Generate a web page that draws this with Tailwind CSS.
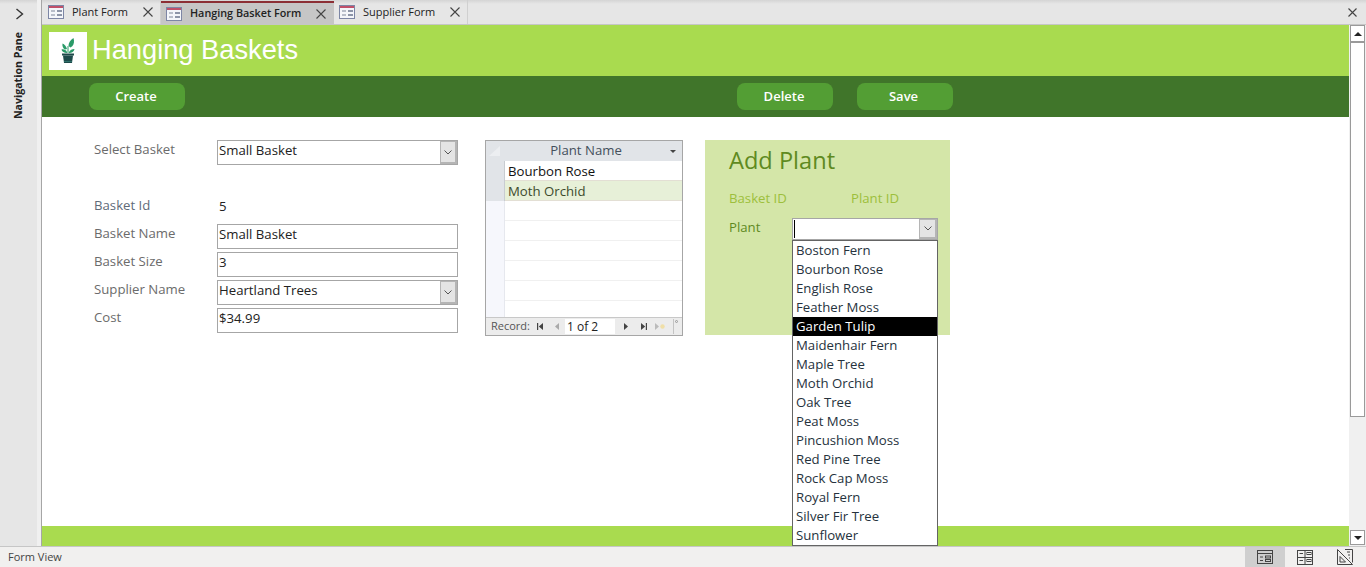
<!DOCTYPE html>
<html lang="en">
<head>
  <meta charset="UTF-8" />
  <title>Hanging Baskets</title>
  <script src="https://cdn.jsdelivr.net/npm/@tailwindcss/browser@4"></script>
</head>
<body class="overflow-hidden bg-white font-['Open_Sans',sans-serif] text-[13.2px] text-[#222]">
<div class="flex h-[567px] w-[1366px] flex-col">
  <div class="flex h-[546px]">
    <!-- nav pane -->
    <div class="flex w-[37px] flex-col items-center bg-[linear-gradient(#d4d4d4,#e6e6e6_4px)]">
      <svg class="mt-[8px] ml-[1px]" width="9" height="12" viewBox="0 0 9 12"><path d="M1.5 1l6 5-6 5" fill="none" stroke="#333" stroke-width="1.4"/></svg>
      <div class="mt-[12px] ml-[1px] rotate-180 text-[10.6px] font-bold whitespace-nowrap text-[#222] [writing-mode:vertical-rl]">Navigation Pane</div>
    </div>
    <div class="flex w-[5px] justify-end bg-[#f0f0f0]"><div class="h-full w-[1.5px] bg-[#a6a6a6]"></div></div>

    <div class="flex min-w-0 flex-1 flex-col">
      <!-- tabs -->
      <div class="flex h-[25px] items-stretch border-b border-[#c6c6c6] bg-[linear-gradient(#d4d4d4,#e6e6e6_4px)] text-[11px]">
        <div class="flex w-[119px] items-center border-r border-[#d0d0d0] bg-[linear-gradient(#d4d4d4,#e6e6e6_4px)] pl-[6px]">
          <svg width="16" height="14" viewBox="0 0 16 14"><rect x=".5" y=".5" width="15" height="13" fill="#f4f6fa" stroke="#7d86a5"/><rect x="1" y="1" width="14" height="2" fill="#c0506a"/><path d="M3 6h4M3 10h4" stroke="#7d8699"/><rect x="9" y="5" width="5" height="2" fill="#8d95a8"/><rect x="9" y="9" width="5" height="2" fill="#8d95a8"/></svg>
          <span class="ml-[8px] w-[71px] text-[#222]">Plant Form</span>
          <svg width="10" height="10" viewBox="0 0 10 10"><path d="M.5.5l9 9M9.5.5l-9 9" stroke="#444" stroke-width="1.1"/></svg>
        </div>
        <div class="mt-[1px] flex w-[173px] items-center border-t-2 border-[#8c2f35] bg-[#c6c6c6] pl-[5px]">
          <svg width="16" height="14" viewBox="0 0 16 14"><rect x=".5" y=".5" width="15" height="13" fill="#f4f6fa" stroke="#7d86a5"/><rect x="1" y="1" width="14" height="2" fill="#c0506a"/><path d="M3 6h4M3 10h4" stroke="#7d8699"/><rect x="9" y="5" width="5" height="2" fill="#8d95a8"/><rect x="9" y="9" width="5" height="2" fill="#8d95a8"/></svg>
          <span class="ml-[8px] w-[126px] text-[10.8px] font-semibold text-[#222]">Hanging Basket Form</span>
          <svg width="10" height="10" viewBox="0 0 10 10"><path d="M.5.5l9 9M9.5.5l-9 9" stroke="#444" stroke-width="1.1"/></svg>
        </div>
        <div class="flex w-[134px] items-center border-r border-[#d0d0d0] bg-[linear-gradient(#d4d4d4,#e6e6e6_4px)] pl-[5px]">
          <svg width="16" height="14" viewBox="0 0 16 14"><rect x=".5" y=".5" width="15" height="13" fill="#f4f6fa" stroke="#7d86a5"/><rect x="1" y="1" width="14" height="2" fill="#c0506a"/><path d="M3 6h4M3 10h4" stroke="#7d8699"/><rect x="9" y="5" width="5" height="2" fill="#8d95a8"/><rect x="9" y="9" width="5" height="2" fill="#8d95a8"/></svg>
          <span class="ml-[8px] w-[87px] text-[#222]">Supplier Form</span>
          <svg width="10" height="10" viewBox="0 0 10 10"><path d="M.5.5l9 9M9.5.5l-9 9" stroke="#444" stroke-width="1.1"/></svg>
        </div>
        <div class="flex flex-1 items-center justify-end pr-[9px]">
          <svg width="9" height="9" viewBox="0 0 9 9"><path d="M.5.5l8 8M8.5.5l-8 8" stroke="#444" stroke-width="1.1"/></svg>
        </div>
      </div>

      <div class="flex min-h-0 flex-1">
        <!-- form -->
        <div class="flex min-w-0 flex-1 flex-col">
          <div class="flex h-[51px] items-center bg-[#a9db4f] pl-[7px]">
            <div class="flex h-[38px] w-[38px] items-center justify-center bg-white">
              <svg width="14" height="26" viewBox="0 0 14 26"><path d="M7 15V8" stroke="#2a9a68" stroke-width="1"/><path d="M7.500 8c0-3 1.500-6 5-8 1 3 .5 6-1 8l-2 1.500z" fill="#2a9a68"/><path d="M6 11C5 8 3.500 6.500 1.500 5.500 1 8 2 10.500 4 11.500z" fill="#2a9a68"/><path d="M6 14c-1-2-3-3-5.500-2.500C1 13.500 3 15 6 15z" fill="#2a9a68"/><path d="M8 14c1-2 3-3 5.500-3-.5 2.500-2.500 4-5.500 4z" fill="#2a9a68"/><rect x="1" y="15.500" width="12" height="2" fill="#1d4a4a"/><path d="M2 17.500h10l-1 7.500H3z" fill="#1d4a4a"/><rect x="3" y="23" width="8" height="1" fill="#2f6f6a"/></svg>
            </div>
            <span class="ml-[5px] font-['Liberation_Sans',sans-serif] text-[27.25px] text-white">Hanging Baskets</span>
          </div>
          <div class="flex h-[41px] items-center bg-[#40752a] pl-[47px]">
            <button class="h-[27px] w-[96px] rounded-[8px] bg-[#539e34] pr-[2px] text-[13px] font-semibold text-white">Create</button>
            <button class="ml-[552px] h-[27px] w-[96px] rounded-[8px] bg-[#539e34] pr-[2px] text-[13px] font-semibold text-white">Delete</button>
            <button class="ml-[24px] h-[27px] w-[96px] rounded-[8px] bg-[#539e34] pr-[3px] text-[13px] font-semibold text-white">Save</button>
          </div>

          <div class="flex flex-1 items-start pt-[23px] pl-[52px]">
            <!-- basket fields -->
            <div class="w-[364px]">
              <div class="flex h-[25px]">
                <span class="w-[123px] leading-[19px] text-[#6b6b6b]">Select Basket</span>
                <div class="flex w-[241px] items-stretch border border-[#a6a6a6] bg-white">
                  <span class="flex-1 pl-[1px] leading-[19px]">Small Basket</span>
                  <span class="flex w-[17px] items-center justify-center border border-r-2 border-b-2 border-[#b5b5b5] bg-[#e4e4e4]"><svg width="8" height="5" viewBox="0 0 8 5"><path d="M.5.500L4 4 7.500.5" fill="none" stroke="#555"/></svg></span>
                </div>
              </div>
              <div class="mt-[31px] flex h-[28px]">
                <span class="w-[123px] leading-[19px] text-[#5f6b78]">Basket Id</span>
                <span class="pl-[2px] leading-[21px]">5</span>
              </div>
              <div class="flex h-[28px]">
                <span class="w-[123px] leading-[19px] text-[#6b6b6b]">Basket Name</span>
                <div class="h-[25px] w-[241px] border border-[#a6a6a6] pl-[1px] leading-[19px]">Small Basket</div>
              </div>
              <div class="flex h-[28px]">
                <span class="w-[123px] leading-[19px] text-[#6b6b6b]">Basket Size</span>
                <div class="h-[25px] w-[241px] border border-[#a6a6a6] pl-[1px] leading-[19px]">3</div>
              </div>
              <div class="flex h-[28px]">
                <span class="w-[123px] leading-[19px] text-[#6b6b6b]">Supplier Name</span>
                <div class="flex h-[25px] w-[241px] items-stretch border border-[#a6a6a6]">
                  <span class="flex-1 pl-[1px] leading-[19px]">Heartland Trees</span>
                  <span class="flex w-[17px] items-center justify-center border border-r-2 border-b-2 border-[#b5b5b5] bg-[#e4e4e4]"><svg width="8" height="5" viewBox="0 0 8 5"><path d="M.5.500L4 4 7.500.5" fill="none" stroke="#555"/></svg></span>
                </div>
              </div>
              <div class="flex h-[28px]">
                <span class="w-[123px] leading-[19px] text-[#6b6b6b]">Cost</span>
                <div class="h-[25px] w-[241px] border border-[#a6a6a6] pl-[1px] leading-[19px]">$34.99</div>
              </div>
            </div>

            <!-- plant datasheet -->
            <div class="ml-[27px] flex h-[196px] w-[198px] flex-col border border-[#a6a6a6]">
              <div class="flex h-[20px] bg-[#e1e4e8]">
                <div class="flex w-[18px] items-center justify-center"><svg width="14" height="12" viewBox="0 0 14 12"><path d="M1 11L12 1v10z" fill="#eceef1"/></svg></div>
                <div class="flex-1 pl-[4px] text-center leading-[18px] text-[#44505c]">Plant Name</div>
                <div class="flex w-[18px] items-center justify-center"><svg width="6" height="3" viewBox="0 0 6 3"><path d="M0 0h6L3 3z" fill="#444"/></svg></div>
              </div>
              <div class="flex h-[20px]"><div class="w-[19px] border-r border-[#c8ccd1] bg-[#e1e4e8]"></div><div class="flex-1 border-b border-[#e3dfd4] pl-[3px] leading-[20px] text-[#111]">Bourbon Rose</div></div>
              <div class="flex h-[20px]"><div class="w-[19px] border-r border-[#c8ccd1] bg-[#e1e4e8]"></div><div class="flex-1 border-b border-[#e3dfd4] bg-[#e7f0d8] pl-[3px] leading-[20px] text-[#3c4a2c]">Moth Orchid</div></div>
              <div class="flex h-[20px]"><div class="w-[19px] border-r border-[#e6e8ee] bg-[#f6f7fc]"></div><div class="flex-1 border-b border-[#f0f0f0]"></div></div>
              <div class="flex h-[20px]"><div class="w-[19px] border-r border-[#e6e8ee] bg-[#f6f7fc]"></div><div class="flex-1 border-b border-[#f0f0f0]"></div></div>
              <div class="flex h-[20px]"><div class="w-[19px] border-r border-[#e6e8ee] bg-[#f6f7fc]"></div><div class="flex-1 border-b border-[#f0f0f0]"></div></div>
              <div class="flex h-[20px]"><div class="w-[19px] border-r border-[#e6e8ee] bg-[#f6f7fc]"></div><div class="flex-1 border-b border-[#f0f0f0]"></div></div>
              <div class="flex h-[20px]"><div class="w-[19px] border-r border-[#e6e8ee] bg-[#f6f7fc]"></div><div class="flex-1 border-b border-[#f0f0f0]"></div></div>
              <div class="flex flex-1"><div class="w-[19px] border-r border-[#e6e8ee] bg-[#f6f7fc]"></div><div class="flex-1"></div></div>
              <div class="flex h-[18px] shrink-0 items-center border-t border-[#c8c8c8] bg-[#ececec] pl-[5px] text-[11px] text-[#555]">
                <span class="w-[39px] shrink-0">Record:</span>
                <svg class="ml-[7px] shrink-0" width="6" height="7" viewBox="0 0 6 7"><path d="M0 0h1.200v7H0zM6 0v7L1.800 3.500z" fill="#444"/></svg>
                <svg class="ml-[12px] shrink-0" width="4" height="7" viewBox="0 0 4 7"><path d="M4 0v7L0 3.500z" fill="#aaa"/></svg>
                <span class="ml-[6px] h-[15px] w-[50px] shrink-0 bg-white pl-[2px] text-[12px] leading-[15px] text-[#222]">1 of 2</span>
                <svg class="ml-[9px] shrink-0" width="4" height="7" viewBox="0 0 4 7"><path d="M0 0v7l4-3.500z" fill="#444"/></svg>
                <svg class="ml-[13px] shrink-0" width="6" height="7" viewBox="0 0 6 7"><path d="M0 0v7l4.200-3.500zM4.800 0H6v7H4.800z" fill="#444"/></svg>
                <svg class="ml-[8px] shrink-0" width="10" height="7" viewBox="0 0 10 7"><path d="M0 0v7l4-3.500z" fill="#bbb"/><circle cx="7.500" cy="3.500" r="2.200" fill="#f0dfa8"/></svg>
                <span class="ml-[8px] h-[15px] w-[8px] shrink-0 border-l border-[#c4c4c4]"><span class="mt-[1px] ml-[1px] block h-[3px] w-[3px] rounded-full border border-[#999]"></span></span>
              </div>
            </div>

            <!-- add plant panel -->
            <div class="ml-[22px] h-[195px] w-[245px] bg-[#d4e6a8] pt-[3px] pl-[24px]">
              <div class="text-[23.6px] leading-[34px] text-[#5f8a1f]">Add Plant</div>
              <div class="mt-[12px] flex leading-[19px] text-[#9dbf3c]">
                <span class="w-[122px]">Basket ID</span><span>Plant ID</span>
              </div>
              <div class="mt-[10px] flex">
                <span class="w-[63px] leading-[19px] text-[#5f8a1f]">Plant</span>
                <div class="relative flex h-[22px] w-[146px] border border-[#a6a6a6] bg-white">
                  <span class="mt-[1px] ml-[1px] h-[18px] w-[1px] bg-black"></span>
                  <span class="ml-auto flex w-[18px] items-center justify-center border border-r-2 border-b-2 border-[#b5b5b5] bg-[#e4e4e4]"><svg width="8" height="5" viewBox="0 0 8 5"><path d="M.5.500L4 4 7.500.5" fill="none" stroke="#555"/></svg></span>
                  <!-- open combo list -->
                  <ul class="absolute top-[21px] left-[-1px] z-10 w-[146px] border border-[#646464] bg-white text-[#26323d]">
                    <li class="h-[19px] pl-[3px] leading-[19px]">Boston Fern</li>
                    <li class="h-[19px] pl-[3px] leading-[19px]">Bourbon Rose</li>
                    <li class="h-[19px] pl-[3px] leading-[19px]">English Rose</li>
                    <li class="h-[19px] pl-[3px] leading-[19px]">Feather Moss</li>
                    <li class="h-[19px] bg-black pl-[3px] leading-[19px] text-white">Garden Tulip</li>
                    <li class="h-[19px] pl-[3px] leading-[19px]">Maidenhair Fern</li>
                    <li class="h-[19px] pl-[3px] leading-[19px]">Maple Tree</li>
                    <li class="h-[19px] pl-[3px] leading-[19px]">Moth Orchid</li>
                    <li class="h-[19px] pl-[3px] leading-[19px]">Oak Tree</li>
                    <li class="h-[19px] pl-[3px] leading-[19px]">Peat Moss</li>
                    <li class="h-[19px] pl-[3px] leading-[19px]">Pincushion Moss</li>
                    <li class="h-[19px] pl-[3px] leading-[19px]">Red Pine Tree</li>
                    <li class="h-[19px] pl-[3px] leading-[19px]">Rock Cap Moss</li>
                    <li class="h-[19px] pl-[3px] leading-[19px]">Royal Fern</li>
                    <li class="h-[19px] pl-[3px] leading-[19px]">Silver Fir Tree</li>
                    <li class="h-[19px] pl-[3px] leading-[19px]">Sunflower</li>
                  </ul>
                </div>
              </div>
            </div>
          </div>

          <div class="h-[20px] bg-[#a9db4f]"></div>
        </div>

        <!-- scrollbar -->
        <div class="flex w-[17px] flex-col items-center bg-[#f0f0f0]">
          <div class="flex h-[17px] w-[15px] items-center justify-center border border-[#9a9a9a] bg-white"><svg width="8" height="4" viewBox="0 0 8 4"><path d="M4 0l4 4H0z" fill="#222"/></svg></div>
          <div class="h-[375px] w-[15px] border border-[#9a9a9a] bg-white"></div>
          <div class="mt-auto mb-[1px] flex h-[15px] w-[15px] items-center justify-center border border-[#9a9a9a] bg-white"><svg width="8" height="4" viewBox="0 0 8 4"><path d="M0 0h8L4 4z" fill="#222"/></svg></div>
        </div>
      </div>
    </div>
  </div>

  <!-- status bar -->
  <div class="flex h-[21px] items-center border-t border-[#c6c6c6] bg-[#f1f0ef] pl-[8px] text-[11px] text-[#444]">
    <span>Form View</span>
    <div class="ml-auto flex h-full pr-[1px]">
      <div class="flex w-[40px] items-center justify-center bg-[#cfcfcf]">
        <svg width="16" height="14" viewBox="0 0 16 14"><rect x=".5" y=".5" width="15" height="13" fill="none" stroke="#444"/><path d="M.5 3.500h15M3 7h3M3 10.500h3" stroke="#444"/><rect x="8.500" y="6" width="5" height="2" fill="none" stroke="#444"/><rect x="8.500" y="9.500" width="5" height="2" fill="none" stroke="#444"/></svg>
      </div>
      <div class="flex w-[40px] items-center justify-center">
        <svg width="16" height="15" viewBox="0 0 16 15"><rect x=".5" y=".5" width="15" height="14" fill="none" stroke="#444"/><path d="M8 .5v14M.5 7.500h15M2.500 3.500h3.500M2.500 10.500h3.500" stroke="#444"/><rect x="10" y="2.500" width="4" height="2" fill="none" stroke="#444"/><rect x="10" y="9.500" width="4" height="2" fill="none" stroke="#444"/></svg>
      </div>
      <div class="flex w-[40px] items-center justify-center">
        <svg width="16" height="16" viewBox="0 0 16 16"><path d="M.5.500l15 15H.500zM3 7.500V13h5.500z" fill="none" stroke="#444"/><path d="M8 .5h7.500v13M10 3h3M11 6h2M12 9h1" fill="none" stroke="#444"/></svg>
      </div>
    </div>
  </div>
</div>
</body>
</html>
